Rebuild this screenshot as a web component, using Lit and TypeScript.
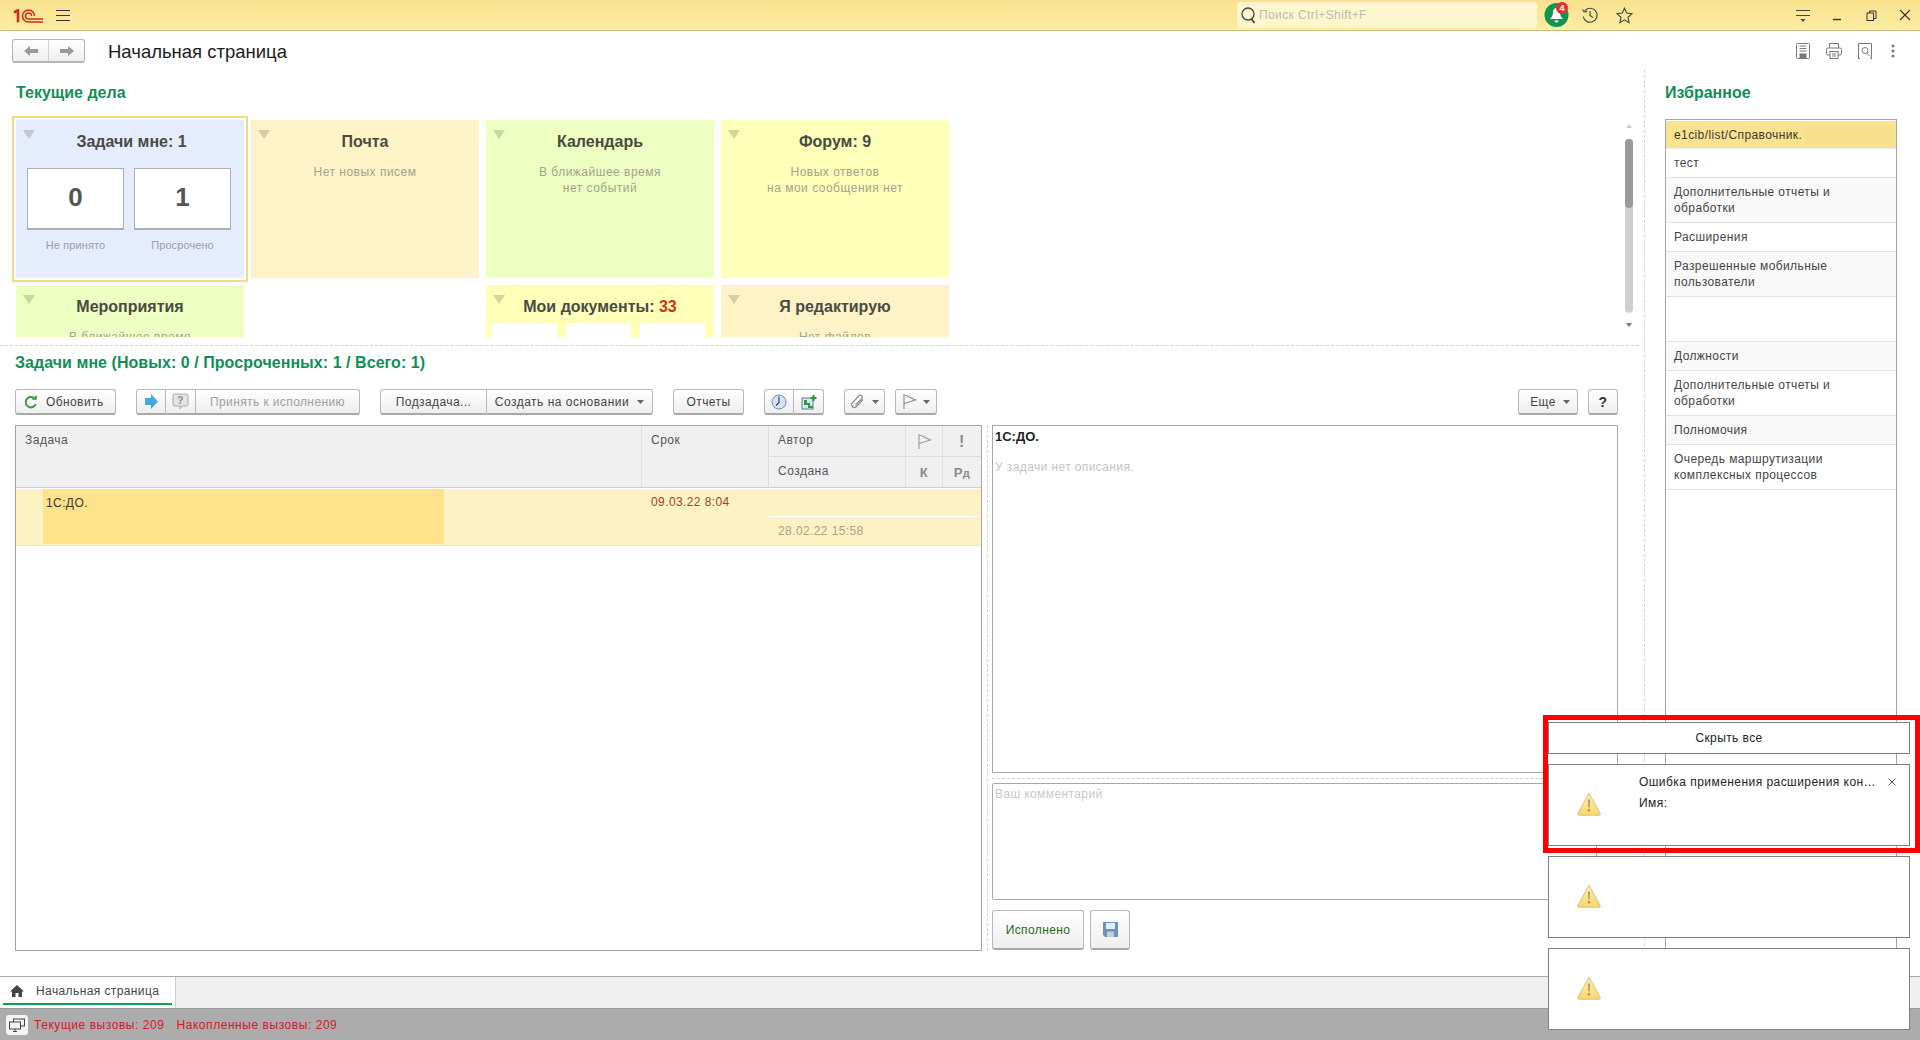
import { LitElement, html, css } from 'lit';
import { customElement } from 'lit/decorators.js';

const caret = html`<svg class="caret" width="7" height="4" viewBox="0 0 7 4"><path d="M0 0h7L3.500 4z" fill="#666"/></svg>`;

const warn = html`<svg width="24" height="24" viewBox="0 0 24 24">
  <defs><linearGradient id="wg" x1="0" y1="0" x2="0" y2="1"><stop offset="0" stop-color="#fdf0b0"/><stop offset="1" stop-color="#f8d76a"/></linearGradient></defs>
  <path d="M12 1.200 23.200 21.600q.4 1.400-1 1.600H1.800q-1.400-.2-1-1.600z" fill="url(#wg)" stroke="#d5c07a"/>
  <path d="M11 7.500h2l-.4 8h-1.200z" fill="#a39766"/><circle cx="12" cy="18.300" r="1.300" fill="#a39766"/>
</svg>`;

const flag = (c: string) => html`<svg width="15" height="17" viewBox="0 0 15 17" fill="none" stroke=${c} stroke-width="1.100"><path d="M2 1v15M2 1.500l11.500 5.500L2 10.500"/></svg>`;

const favorites = [
  { t: 'тест', h: 29 },
  { t: 'Дополнительные отчеты и<br>обработки', h: 45 },
  { t: 'Расширения', h: 29 },
  { t: 'Разрешенные мобильные<br>пользователи', h: 45 },
  { t: '', h: 45 },
  { t: 'Должности', h: 29 },
  { t: 'Дополнительные отчеты и<br>обработки', h: 45 },
  { t: 'Полномочия', h: 29 },
  { t: 'Очередь маршрутизации<br>комплексных процессов', h: 45 },
];

@customElement('app-root')
export class AppRoot extends LitElement {
  static styles = css`
    :host {
      display: block;
      width: 1920px;
      height: 1040px;
      position: relative;
      overflow: hidden;
      background: #fff;
      font-family: "Liberation Sans", Arial, sans-serif;
      font-size: 12px;
      letter-spacing: .4px;
      color: #333;
    }
    .app { display: flex; flex-direction: column; height: 1040px; }

    .topbar {
      height: 30px;
      flex: none;
      display: flex;
      align-items: center;
      background: linear-gradient(#f9e28f, #fdeca2);
      border-bottom: 1px solid #c8bc82;
    }
    .logo { margin-left: 13px; margin-top: 1px; }
    .burger { margin-left: 13px; width: 14px; height: 11px; border-top: 1px solid #333; border-bottom: 1px solid #333; position: relative; box-sizing: border-box; }
    .burger i { display: block; height: 1px; background: #333; margin-top: 4px; }
    .search {
      margin-left: auto;
      width: 300px;
      height: 26px;
      box-sizing: border-box;
      background: #fdf6cf;
      border-radius: 3px;
      display: flex;
      align-items: center;
      padding-left: 3px;
      gap: 3px;
      color: #bdbdb0;
      font-size: 12px;
    }
    .tb-group { display: flex; margin-left: 2px; margin-right: 147px; }
    .tb-ico { width: 34px; height: 30px; display: flex; align-items: center; justify-content: center; position: relative; }
    .win-group { display: flex; gap: 4px; }
    .win-group .tb-ico { width: 30px; }
    .badge {
      position: absolute;
      left: 17px;
      top: 2px;
      width: 12px;
      height: 12px;
      border-radius: 50%;
      background: #e4312c;
      color: #fff;
      font-size: 9px;
      font-weight: bold;
      line-height: 12px;
      text-align: center;
      letter-spacing: 0;
    }

    .head { height: 39px; flex: none; display: flex; align-items: flex-start; }
    .nav {
      margin: 8px 0 0 12px;
      height: 24px;
      width: 73px;
      box-sizing: border-box;
      display: flex;
      border: 1px solid #b5b5b5;
      border-bottom-width: 2px;
      border-radius: 3px;
      background: linear-gradient(#fff, #eee);
    }
    .nav span { flex: 1; display: flex; align-items: center; justify-content: center; }
    .nav span + span { border-left: 1px solid #d2d2d2; }
    .page-title { margin: 10px 0 0 23px; font-size: 18.500px; line-height: 22px; color: #1c1c1c; letter-spacing: 0; }
    .head-icons { margin-left: auto; display: flex; margin-top: 10px; margin-right: 15px; }
    .head-icons span { width: 31px; height: 20px; display: flex; align-items: center; justify-content: center; }
    .head-icons span:last-child { width: 25px; }

    .cols { flex: 1; display: flex; min-height: 0; }
    .main { width: 1645px; flex: none; box-sizing: border-box; border-right: 1px dashed #d2d2d2; display: flex; flex-direction: column; }
    .sec { font-size: 16px; font-weight: bold; color: #0f8f55; line-height: 18px; letter-spacing: 0; }
    .sec.cur { padding: 14px 0 14px 16px; }

    .board { height: 221px; flex: none; display: flex; padding-right: 11px; }
    .board-clip { flex: 1; overflow: hidden; padding-left: 16px; padding-top: 4px; margin-top: 0; }
    .tiles { display: grid; grid-template-columns: repeat(4, 228px); gap: 7px; grid-auto-rows: 158px; }
    .tile { position: relative; text-align: center; padding-top: 12px; box-sizing: border-box; }
    .tile::before {
      content: '';
      position: absolute;
      left: 7px;
      top: 10px;
      border-style: solid;
      border-width: 9px 6.500px 0;
      border-color: rgba(90, 90, 70, .25) transparent transparent;
    }
    .tile b { display: block; font-size: 16px; line-height: 20px; color: #4a4a44; letter-spacing: 0; }
    .tile.blue b { padding-left: 3px; }
    .tile b em { font-style: normal; color: #cc3311; }
    .tile p { margin: 12px 0 0; font-size: 12px; line-height: 16px; color: #a3a390; letter-spacing: .5px; }
    .focus { outline: 2px solid #f1da84; outline-offset: 2px; }
    .blue { background: #e4ecfd; }
    .orange { background: #fdf3c7; }
    .green { background: #eeffc2; }
    .yellow { background: #feffb8; }
    .counters { display: flex; gap: 10px; padding: 16px 13px 0 11px; }
    .counter { flex: 1; }
    .counter div {
      height: 62px;
      box-sizing: border-box;
      background: #fff;
      border: 1px solid #aab0ba;
      border-bottom-width: 2px;
      font-size: 26px;
      font-weight: bold;
      color: #555;
      line-height: 56px;
      letter-spacing: 0;
    }
    .counter span { display: block; margin-top: 8px; font-size: 11px; line-height: 14px; color: #9a9ea6; letter-spacing: .1px; }
    .doc-boxes { display: flex; gap: 9px; padding: 6px 9px 0 6px; }
    .doc-boxes i { flex: 1; height: 30px; background: #fff; }

    .scroll { width: 8px; display: flex; flex-direction: column; align-items: center; padding-top: 8px; }
    .scroll .track { width: 8px; height: 174px; margin-top: 11px; border-radius: 4px; background: #d0d0d0; }
    .scroll .thumb { height: 69px; border-radius: 4px; background: #9a9a9a; }
    .scroll .up { border-style: solid; border-width: 0 3px 4px; border-color: transparent transparent #ccc; }
    .scroll .down { margin-top: 10px; border-style: solid; border-width: 4px 3px 0; border-color: #777 transparent transparent; }

    .hr-dash { height: 0; border-top: 1px dashed #d2d2d2; margin: 8px 5px 0 0; flex: none; }
    .sec.tasks { padding: 8px 0 0 15px; letter-spacing: .05px; }

    .toolbar { display: flex; padding: 17px 0 0 15px; height: 26px; flex: none; margin-bottom: 10px; box-sizing: content-box; }
    .btn {
      height: 26px;
      box-sizing: border-box;
      display: flex;
      align-items: center;
      justify-content: center;
      gap: 8px;
      border: 1px solid #b8b8b8;
      border-bottom: 2px solid #a8a8a8;
      border-radius: 3px;
      background: linear-gradient(#fff, #eee);
      color: #444;
      font-size: 12px;
      white-space: nowrap;
    }
    .refresh { width: 101px; justify-content: flex-start; padding-left: 8px; }
    .grp { display: flex; border-radius: 3px; }
    .grp .btn { border-radius: 0; }
    .grp .btn + .btn { border-left: none; }
    .grp .btn:first-child { border-radius: 3px 0 0 3px; }
    .grp .btn:last-child { border-radius: 0 3px 3px 0; }
    .dis { color: #a0a0a0; }

    .work { flex: 1; display: flex; padding: 0 0 25px 15px; min-height: 0; }
    .table { width: 967px; box-sizing: border-box; border: 1px solid #a4a4a4; flex: none; }
    .thead {
      display: grid;
      grid-template-columns: 626px 127px 137px 37px 38px;
      grid-template-rows: 30px 31px;
      background: #f0f0f0;
      border-bottom: 1px solid #d0d0d0;
      color: #555;
    }
    .th { border-right: 1px solid #dcdcdc; padding: 7px 0 0 9px; box-sizing: border-box; line-height: 15px; letter-spacing: .5px; }
    .th.span { grid-row: span 2; }
    .th.low { border-top: 1px solid #dcdcdc; }
    .th.ic { padding: 0; display: flex; align-items: center; justify-content: center; color: #8a8a8a; font-weight: bold; font-size: 13px; }
    .th.ic sub { font-size: 11px; vertical-align: baseline; position: relative; top: 1px; }
    .th:nth-child(5), .th:last-child { border-right: none; }
    .trow {
      margin-top: 1px;
      height: 57px;
      box-sizing: border-box;
      display: grid;
      grid-template-columns: 626px 127px 212px;
      background: #fdf2c4;
      border-bottom: 1px solid #e4e4e4;
    }
    .c-task { padding-left: 27px; }
    .c-task div { width: 401px; height: 55px; background: #fee28c; padding: 7px 0 0 3px; box-sizing: border-box; line-height: 15px; color: #3a3a2a; }
    .c-date { padding: 6px 0 0 9px; line-height: 15px; color: #a93a2c; }
    .c-made { display: flex; flex-direction: column; }
    .c-made span:first-child { height: 27px; border-bottom: 1px solid #fff; }
    .c-made span:last-child { padding: 7px 0 0 9px; line-height: 15px; color: #aca28a; }

    .split { width: 0; border-left: 1px dashed #d2d2d2; margin: 0 4px 0 5px; }
    .side { width: 626px; flex: none; display: flex; flex-direction: column; }
    .desc { height: 348px; flex: none; box-sizing: border-box; border: 1px solid #a8a8a8; padding: 3px 2px; }
    .desc b { display: block; color: #222; line-height: 15px; font-size: 13px; letter-spacing: 0; }
    .desc span { display: block; margin-top: 16px; line-height: 15px; color: #c4c4c4; }
    .side-dash { margin: 5px 0 4px; border-top: 1px dashed #d2d2d2; }
    .comment { height: 117px; width: 605px; flex: none; box-sizing: border-box; border: 1px solid #a8a8a8; border-radius: 2px; padding: 3px 2px; color: #c8c8c8; line-height: 15px; }
    .actions { display: flex; gap: 6px; margin-top: 10px; }
    .actions .btn { height: 40px; }

    .fav { flex: 1; padding: 14px 0 0 20px; display: flex; flex-direction: column; }
    .fav-list { margin-top: 17px; width: 232px; height: 831px; box-sizing: border-box; border: 1px solid #a4a4a4; padding-top: 1px; }
    .fav-top { height: 27px; background: #fbe28e; border-bottom: 1px solid #eee; display: flex; align-items: center; padding-left: 8px; position: relative; color: #3a3a2a; }
    .fav-top::after { content: ''; position: absolute; left: 139px; top: 4px; width: 87px; height: 19px; background: #f8df8e; }
    .fav-row { box-sizing: border-box; border-bottom: 1px solid #e2e2e2; padding: 6px 0 0 8px; line-height: 16px; color: #444; }
    .fav-row:nth-child(even) { background: #f9f9f9; }

    .tabs { height: 32px; flex: none; box-sizing: border-box; border-top: 1px solid #aaa; background: #f0f0f0; display: flex; }
    .tab { width: 176px; box-sizing: border-box; background: #fff; border-right: 1px solid #d0d0d0; position: relative; display: flex; align-items: center; padding: 0 0 4px 10px; gap: 12px; color: #444; }
    .tab::after { content: ''; position: absolute; left: 3px; right: 3px; bottom: 3px; height: 2px; background: #0f9d58; }

    .status { height: 32px; flex: none; box-sizing: border-box; background: #acacac; border-top: 1px solid #9a9a9a; display: flex; align-items: center; padding-left: 6px; color: #d4192b; letter-spacing: .55px; }
    .status .scr { width: 22px; height: 20px; background: #f4f4f4; border-radius: 3px; display: flex; align-items: center; justify-content: center; margin-right: 6px; }
    .status span + span { margin-left: 12px; }

    .frame { position: absolute; left: 1543px; top: 715px; width: 377px; height: 138px; box-sizing: border-box; border: 5px solid #f00; pointer-events: none; }
    .notices { position: absolute; left: 1548px; top: 722px; width: 362px; display: flex; flex-direction: column; gap: 10px; }
    .hide-all { height: 32px; box-sizing: border-box; background: #fff; border: 1px solid #808080; display: flex; align-items: center; justify-content: center; color: #222; }
    .notice { height: 82px; box-sizing: border-box; background: #fff; border: 1px solid #808080; display: flex; align-items: center; padding-left: 28px; position: relative; }
    .notice > svg:first-child { margin-top: -2px; }
    .n-text { position: absolute; left: 90px; top: 7px; width: 240px; line-height: 21px; color: #222; letter-spacing: .45px; }
    .n-text div { overflow: hidden; white-space: nowrap; text-overflow: ellipsis; }
    .n-close { position: absolute; right: 13px; top: 13px; }
  `;

  render() {
    return html`
      <div class="app">
        <div class="topbar">
          <svg class="logo" width="30" height="14" viewBox="0 0 30 14" fill="none" stroke="#d8281c">
            <path d="M1 3.500 5 1.200v12" stroke-width="2.600"/>
            <path d="M21.500 7A6 6 0 1 0 15.500 13H30" stroke-width="1.500"/>
            <path d="M18.500 7A3 3 0 1 0 15.500 10H30" stroke-width="1.500"/>
          </svg>
          <div class="burger"><i></i></div>
          <div class="search">
            <svg width="16" height="18" viewBox="0 0 16 18" fill="none" stroke="#444" stroke-width="1.300"><circle cx="8" cy="8" r="6"/><path d="m11.500 13 3 4" stroke-width="1.800"/></svg>
            Поиск Ctrl+Shift+F
          </div>
          <div class="tb-group">
            <div class="tb-ico">
              <svg width="25" height="24" viewBox="0 0 25 24"><ellipse cx="12.500" cy="12" rx="12" ry="12" fill="#12964f"/><path d="M12.500 5c-2.600 0-3.600 2.400-3.600 5 0 3-1.400 4.600-3 6h13.200c-1.600-1.400-3-3-3-6 0-2.600-1-5-3.600-5zM10.500 17.500h4a2 2 0 0 1-4 0z" fill="#fff"/></svg>
              <span class="badge">4</span>
            </div>
            <div class="tb-ico">
              <svg width="18" height="18" viewBox="0 0 18 18" fill="none" stroke="#444" stroke-width="1.100"><path d="M3.500 5A7 7 0 1 1 2.200 10.500"/><path d="M1.500 3.500 3.200 6l3-.6"/><path d="M9 5v4.500l3 2"/></svg>
            </div>
            <div class="tb-ico">
              <svg width="17" height="17" viewBox="0 0 17 17" fill="none" stroke="#444" stroke-width="1.100"><path d="m8.500 1.200 2.200 4.900 5.300.6-4 3.600 1.100 5.300-4.600-2.700-4.600 2.700 1.100-5.300-4-3.600 5.300-.6z"/></svg>
            </div>
          </div>
          <div class="win-group">
            <div class="tb-ico"><svg width="16" height="16" viewBox="0 0 16 16" stroke="#444" fill="none"><path d="M1 3.500h14M1 8.500h14"/><path d="M5.500 12h5L8 15z" fill="#444" stroke="none"/></svg></div>
            <div class="tb-ico"><svg width="10" height="12" viewBox="0 0 10 12"><path d="M1 10.500h8" stroke="#333" stroke-width="1.400"/></svg></div>
            <div class="tb-ico"><svg width="11" height="11" viewBox="0 0 11 11" fill="none" stroke="#333"><rect x="1" y="3" width="6.500" height="7.500"/><path d="M3.500 3V1h6.500v7.500H7.500"/></svg></div>
            <div class="tb-ico"><svg width="12" height="12" viewBox="0 0 12 12" stroke="#333" stroke-width="1.100"><path d="m1 1 10 10M11 1 1 11"/></svg></div>
          </div>
        </div>

        <div class="head">
          <div class="nav">
            <span><svg width="14" height="12" viewBox="0 0 14 12" fill="#999"><path d="M0 6 6 1v3h8v4H6v3z"/></svg></span>
            <span><svg width="14" height="12" viewBox="0 0 14 12" fill="#999"><path d="M14 6 8 1v3H0v4h8v3z"/></svg></span>
          </div>
          <div class="page-title">Начальная страница</div>
          <div class="head-icons">
            <span><svg width="16" height="18" viewBox="0 0 16 18" fill="none" stroke="#777"><rect x="1.500" y="1.500" width="13" height="15" rx="1"/><path d="M4.500 4h7M4.500 6.500h7M4.500 9h7"/><rect x="5" y="12" width="6" height="4.500" fill="#777"/></svg></span>
            <span><svg width="18" height="18" viewBox="0 0 18 18" fill="none" stroke="#777"><path d="M4.500 6V1.500h9V6"/><rect x="1.500" y="6" width="15" height="7" rx="1.500"/><rect x="5" y="9.500" width="8" height="7" fill="#fff"/><path d="M7 12h4M7 14h4"/></svg></span>
            <span><svg width="16" height="18" viewBox="0 0 16 18" fill="none" stroke="#777"><path d="M3 16.500H1.500v-15h13v15H13"/><circle cx="8" cy="8.500" r="3"/><path d="m10 11 2.500 3"/></svg></span>
            <span><svg width="4" height="14" viewBox="0 0 4 14" fill="#777"><circle cx="2" cy="2" r="1.500"/><circle cx="2" cy="7" r="1.500"/><circle cx="2" cy="12" r="1.500"/></svg></span>
          </div>
        </div>

        <div class="cols">
          <div class="main">
            <div class="sec cur">Текущие дела</div>
            <div class="board">
              <div class="board-clip">
                <div class="tiles">
                  <div class="tile blue focus">
                    <b>Задачи мне: 1</b>
                    <div class="counters">
                      <div class="counter"><div>0</div><span>Не принято</span></div>
                      <div class="counter"><div>1</div><span>Просрочено</span></div>
                    </div>
                  </div>
                  <div class="tile orange"><b>Почта</b><p>Нет новых писем</p></div>
                  <div class="tile green"><b>Календарь</b><p>В ближайшее время<br>нет событий</p></div>
                  <div class="tile yellow"><b>Форум: 9</b><p>Новых ответов<br>на мои сообщения нет</p></div>
                  <div class="tile green"><b>Мероприятия</b><p>В ближайшее время</p></div>
                  <div></div>
                  <div class="tile yellow"><b>Мои документы: <em>33</em></b><div class="doc-boxes"><i></i><i></i><i></i></div></div>
                  <div class="tile orange"><b>Я редактирую</b><p>Нет файлов</p></div>
                </div>
              </div>
              <div class="scroll">
                <div class="up"></div>
                <div class="track"><div class="thumb"></div></div>
                <div class="down"></div>
              </div>
            </div>
            <div class="hr-dash"></div>
            <div class="sec tasks">Задачи мне (Новых: 0 / Просроченных: 1 / Всего: 1)</div>
            <div class="toolbar">
              <div class="btn refresh">
                <svg width="14" height="14" viewBox="0 0 14 14" fill="none" stroke="#3a9a3f" stroke-width="2"><path d="M11.800 9A5.200 5.200 0 1 1 10 3"/><path d="M7.500 4.800h5.300V0z" stroke="none" fill="#3a9a3f"/></svg>
                Обновить
              </div>
              <div class="grp" style="margin-left:20px">
                <div class="btn" style="width:30px"><svg width="13" height="15" viewBox="0 0 13 15"><path d="M0 4h6V0l7 7.500L6 15v-4H0z" fill="#45a8e2"/></svg></div>
                <div class="btn" style="width:30px"><svg width="17" height="17" viewBox="0 0 17 17"><path d="M3 1h11a2 2 0 0 1 2 2v8a2 2 0 0 1-2 2h-4l-2 3v-3H3a2 2 0 0 1-2-2V3a2 2 0 0 1 2-2z" fill="#e4e4e4" stroke="#aaa"/><text x="8.500" y="11" font-size="10" font-weight="bold" text-anchor="middle" fill="#888" font-family="Liberation Sans">?</text></svg></div>
                <div class="btn dis" style="width:164px">Принять к исполнению</div>
              </div>
              <div class="grp" style="margin-left:20px">
                <div class="btn" style="width:107px">Подзадача...</div>
                <div class="btn" style="width:166px;letter-spacing:.5px">Создать на основании ${caret}</div>
              </div>
              <div class="btn" style="width:71px;margin-left:20px">Отчеты</div>
              <div class="grp" style="margin-left:20px">
                <div class="btn" style="width:30px"><svg width="16" height="16" viewBox="0 0 16 16"><circle cx="8" cy="8" r="7" fill="#d6e4f5" stroke="#7088aa"/><path d="M8 2.500V8.500L5 11.500" fill="none" stroke="#33384a" stroke-width="1.100"/></svg></div>
                <div class="btn" style="width:30px"><svg width="16" height="16" viewBox="0 0 16 16"><rect x="1" y="4" width="11" height="11" fill="#dbe7f2" stroke="#5d7f9c"/><path d="M3 6h3v3h3v3h3v2H7v-3H3z" fill="#2c9a3c"/><path d="M12.500 1v6M9.500 4h6" stroke="#1e9a2f" stroke-width="2"/></svg></div>
              </div>
              <div class="btn" style="width:41px;margin-left:20px;gap:7px"><svg width="15" height="15" viewBox="0 0 15 15" fill="none" stroke="#8a8a8a" stroke-width="1.200"><path d="M13 5.500 6.500 12.500a2.800 2.800 0 0 1-4.200-3.700L9 1.800a2 2 0 0 1 3 2.600L5.500 11"/></svg>${caret}</div>
              <div class="btn" style="width:42px;margin-left:10px;gap:6px">${flag('#888')}${caret}</div>
              <div class="btn" style="width:60px;margin-left:auto;gap:7px;padding-left:4px">Еще ${caret}</div>
              <div class="btn" style="width:30px;margin:0 26px 0 10px;font-size:14px;font-weight:bold;color:#333">?</div>
            </div>
            <div class="work">
              <div class="table">
                <div class="thead">
                  <div class="th span">Задача</div>
                  <div class="th span">Срок</div>
                  <div class="th">Автор</div>
                  <div class="th ic">${flag('#999')}</div>
                  <div class="th ic" style="font-size:16px">!</div>
                  <div class="th low">Создана</div>
                  <div class="th ic low">К</div>
                  <div class="th ic low">Р<sub>д</sub></div>
                </div>
                <div class="trow">
                  <div class="c-task"><div>1С:ДО.</div></div>
                  <div class="c-date">09.03.22 8:04</div>
                  <div class="c-made"><span></span><span>28.02.22 15:58</span></div>
                </div>
              </div>
              <div class="split"></div>
              <div class="side">
                <div class="desc"><b>1С:ДО.</b><span>У задачи нет описания.</span></div>
                <div class="side-dash"></div>
                <div class="comment">Ваш комментарий</div>
                <div class="actions">
                  <div class="btn" style="width:92px;color:#1f6b1f">Исполнено</div>
                  <div class="btn" style="width:40px"><svg width="15" height="15" viewBox="0 0 15 15"><path d="M0 1a1 1 0 0 1 1-1h13a1 1 0 0 1 1 1v14H2l-2-2z" fill="#6b93bc"/><rect x="3" y="1" width="9" height="6" fill="#e4eef8"/><rect x="4" y="9.500" width="7" height="5.500" fill="#c5ccd6"/></svg></div>
                </div>
              </div>
            </div>
          </div>
          <div class="fav">
            <div class="sec">Избранное</div>
            <div class="fav-list">
              <div class="fav-top">e1cib/list/Справочник.</div>
              <div>
                ${favorites.map((f) => html`<div class="fav-row" style="height:${f.h}px" .innerHTML=${f.t}></div>`)}
              </div>
            </div>
          </div>
        </div>

        <div class="tabs">
          <div class="tab">
            <svg width="14" height="12" viewBox="0 0 14 12" fill="#444"><path d="M7 0 0 6.500h2V12h3.500V8h3v4H12V6.500h2z"/></svg>
            Начальная страница
          </div>
        </div>
        <div class="status">
          <div class="scr"><svg width="16" height="14" viewBox="0 0 16 14" fill="none" stroke="#444"><rect x="4.500" y="1" width="11" height="7"/><rect x="0.500" y="4" width="11" height="7" fill="#f4f4f4"/><path d="M4 13.500h4M6 11v2.500"/></svg></div>
          <span>Текущие вызовы: 209</span>
          <span>Накопленные вызовы: 209</span>
        </div>
      </div>

      <div class="notices">
        <div class="hide-all">Скрыть все</div>
        <div class="notice">
          ${warn}
          <div class="n-text"><div>Ошибка применения расширения конфигурации</div><div>Имя:</div></div>
          <svg class="n-close" width="8" height="8" viewBox="0 0 8 8" stroke="#555"><path d="m.5.5 7 7M7.500.5l-7 7"/></svg>
        </div>
        <div class="notice">${warn}</div>
        <div class="notice">${warn}</div>
      </div>
      <div class="frame"></div>
    `;
  }
}
